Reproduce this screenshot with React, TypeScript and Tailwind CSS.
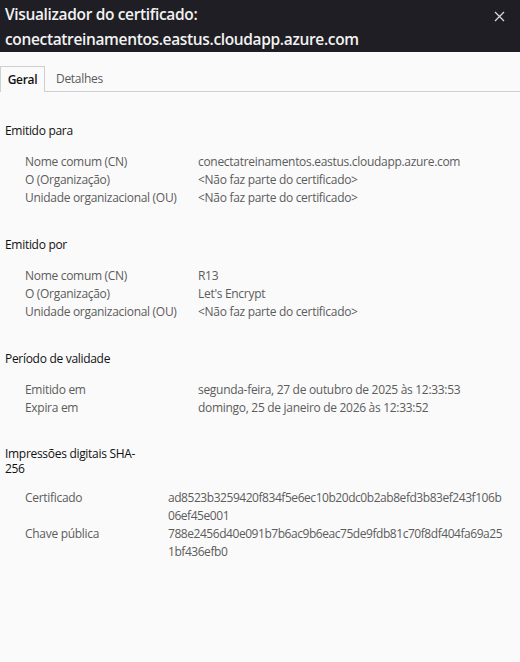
import React from 'react';

const font = { fontFamily: '"Open Sans", "Noto Sans", sans-serif' };

type Row = { label: string; value: string[] };

const sections: { title: string[]; rows: Row[]; valueCol: string; gap: string; top: string; hash?: boolean }[] = [
  {
    title: ['Emitido para'],
    top: 'mt-[30px]',
    gap: 'mt-[13px]',
    valueCol: 'w-[173px]',
    rows: [
      { label: 'Nome comum (CN)', value: ['conectatreinamentos.eastus.cloudapp.azure.com'] },
      { label: 'O (Organização)', value: ['<Não faz parte do certificado>'] },
      { label: 'Unidade organizacional (OU)', value: ['<Não faz parte do certificado>'] },
    ],
  },
  {
    title: ['Emitido por'],
    top: 'mt-[29px]',
    gap: 'mt-[13px]',
    valueCol: 'w-[173px]',
    rows: [
      { label: 'Nome comum (CN)', value: ['R13'] },
      { label: 'O (Organização)', value: ["Let's Encrypt"] },
      { label: 'Unidade organizacional (OU)', value: ['<Não faz parte do certificado>'] },
    ],
  },
  {
    title: ['Período de validade'],
    top: 'mt-[29px]',
    gap: 'mt-[13px]',
    valueCol: 'w-[173px]',
    rows: [
      { label: 'Emitido em', value: ['segunda-feira, 27 de outubro de 2025 às 12:33:53'] },
      { label: 'Expira em', value: ['domingo, 25 de janeiro de 2026 às 12:33:52'] },
    ],
  },
  {
    title: ['Impressões digitais SHA-', '256'],
    top: 'mt-[29px]',
    gap: 'mt-[13px]',
    valueCol: 'w-[143px]',
    hash: true,
    rows: [
      {
        label: 'Certificado',
        value: ['ad8523b3259420f834f5e6ec10b20dc0b2ab8efd3b83ef243f106b', '06ef45e001'],
      },
      {
        label: 'Chave pública',
        value: ['788e2456d40e091b7b6ac9b6eac75de9fdb81c70f8df404fa69a25', '1bf436efb0'],
      },
    ],
  },
];

export default function App() {
  return (
    <div className="h-[662px] w-[520px] overflow-hidden bg-[#fafafa]" style={font}>
      <div className="flex h-[52px] items-start justify-between bg-[#1f1e24] pl-[5px] pr-[15px] pt-[2px]">
        <h1 className="text-[15.5px] font-semibold leading-[25px] tracking-[-0.35px] text-[#f2f2f2]">
          Visualizador do certificado:
          <br />
          conectatreinamentos.eastus.cloudapp.azure.com
        </h1>
        <svg width="11" height="11" viewBox="0 0 11 11" className="mt-[9px]">
          <path d="M1 1L10 10M10 1L1 10" stroke="#d8d8dc" strokeWidth="1.3" />
        </svg>
      </div>

      <div className="mt-[14px] flex h-[26px] items-stretch text-[12px] tracking-[-0.3px]">
        <div className="flex w-[45px] items-center justify-center border-x border-t border-[#cfcfcf] bg-[#fafafa] pt-px font-semibold text-[#111]">
          Geral
        </div>
        <div className="flex flex-1 items-center border-b border-[#cfcfcf] pl-[11px] pt-px text-[#5a5a5a]">
          Detalhes
        </div>
      </div>

      <div className="pl-[5px] tracking-[-0.3px]">
        {sections.map((s) => (
          <section key={s.title.join('')} className={s.top}>
            <h2 className={s.title.length > 1 ? 'w-[140px] text-[12px] leading-[15px] text-[#111]' : 'text-[12px] leading-[18px] text-[#111]'}>
              {s.title.map((t, i) => (
                <div key={i}>{t}</div>
              ))}
            </h2>
            <div className={s.gap}>
              {s.rows.map((r) => (
                <div key={r.label} className="flex pl-[20px] text-[12px] leading-[18px] text-[#5c5c5c]">
                  <div className={`${s.valueCol} shrink-0`}>{r.label}</div>
                  <div className={s.hash ? 'tracking-[-0.45px]' : ''}>
                    {r.value.map((v, i) => (
                      <div key={i}>{v}</div>
                    ))}
                  </div>
                </div>
              ))}
            </div>
          </section>
        ))}
      </div>
    </div>
  );
}
